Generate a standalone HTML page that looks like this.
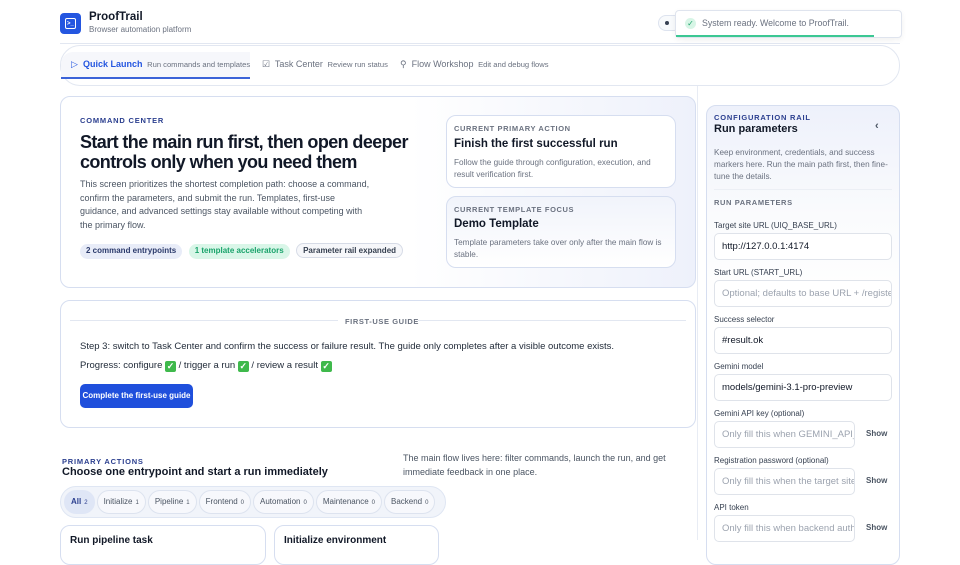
<!DOCTYPE html>
<html><head><meta charset="utf-8"><style>
*{box-sizing:border-box;margin:0;padding:0}
body{width:960px;height:540px;overflow:hidden;background:#fff;font-family:"Liberation Sans",sans-serif;color:#111827;position:relative}
.a{position:absolute}
.lbl{font-size:7.5px;font-weight:bold;letter-spacing:.8px;color:#2b3f8f;line-height:9px}
.glbl{font-size:7.5px;font-weight:bold;letter-spacing:.6px;color:#6b7280}
.card{border:1px solid #d6def0;border-radius:10px;background:#fff}
.pill{border-radius:10px;font-size:8px;font-weight:bold;height:15px;line-height:14px;padding:0 6px;display:inline-block}
.in{position:absolute;left:714px;width:178px;height:27px;border:1px solid #dfe3ea;border-radius:5px;background:#fff;font-size:9.5px;line-height:25px;padding-left:7px;color:#111827;white-space:nowrap;overflow:hidden}
.ph{color:#9ca3af}
.fl{position:absolute;left:714px;font-size:8px;color:#374151}
.show{position:absolute;left:866px;font-size:8px;font-weight:bold;color:#4b5563}
.chip{display:inline-block;height:24px;line-height:22px;border:1px solid #dde3ef;border-radius:12px;padding:0 6px;font-size:8px;color:#4b5563;margin-right:2px;background:#f7f8fc}
.chip b{font-weight:normal;font-size:6px;margin-left:3px}
.ck{display:inline-block;width:11px;height:11px;background:#3fb94c;border-radius:2px;color:#fff;font-size:9px;line-height:11px;text-align:center;vertical-align:-1px;font-weight:bold}
</style></head><body>
<!-- header -->
<div class="a" style="left:60px;top:13px;width:21px;height:21px;background:#2456e0;border-radius:4px"><div class="a" style="left:5px;top:5px;width:11px;height:11px;border:1.3px solid #fff;border-radius:2px"></div><div class="a" style="left:7px;top:8px;font-size:6px;color:#fff;font-weight:bold">&gt;_</div></div>
<div class="a" style="left:89px;top:11px;font-size:11.5px;font-weight:bold">ProofTrail</div>
<div class="a" style="left:89px;top:25px;font-size:8px;color:#6b7280">Browser automation platform</div>
<div class="a" style="left:658px;top:15px;width:24px;height:16px;border:1px solid #dde3ef;border-radius:8px;background:#f8fafc"><div class="a" style="left:6px;top:5px;width:4px;height:4px;border-radius:2px;background:#374151"></div></div>
<div class="a" style="left:60px;top:43px;width:840px;height:1px;background:#e2e7f1"></div>
<!-- toast -->
<div class="a" style="left:675px;top:10px;width:227px;height:28px;border:1px solid #dfe4ee;border-radius:4px;background:#fff;box-shadow:0 2px 6px rgba(0,0,0,.06)">
<div class="a" style="left:9px;top:7px;width:11px;height:11px;border-radius:6px;background:#d7f5e6;color:#1fa36b;font-size:8px;line-height:11px;text-align:center">✓</div>
<div class="a" style="left:26px;top:7px;font-size:8.8px;color:#6b7280">System ready. Welcome to ProofTrail.</div>
<div class="a" style="left:0;top:24px;width:198px;height:2px;background:#3cc793"></div></div>
<!-- tabs -->
<div class="a" style="left:60px;top:45px;width:840px;height:41px;border:1px solid #e2e7f1;border-radius:20px;background:#fff"></div>
<div class="a" style="left:61px;top:52px;width:189px;height:26px;background:#f6f7fb;border-radius:12px 0 0 0"></div>
<div class="a" style="left:61px;top:77px;width:189px;height:2px;background:#3b63d8"></div>
<div class="a" style="left:71px;top:59px;font-size:9px;color:#2456e0">▷</div>
<div class="a" style="left:83px;top:59px;font-size:9px;font-weight:bold;color:#2456e0;white-space:nowrap">Quick Launch <span style="font-weight:normal;color:#6b7280;font-size:7.6px">&nbsp;Run commands and templates</span></div>
<div class="a" style="left:262px;top:59px;font-size:9px;color:#6b7280;white-space:nowrap">☑&nbsp; Task Center <span style="font-size:7.6px">&nbsp;Review run status</span></div>
<div class="a" style="left:400px;top:59px;font-size:9px;color:#6b7280;white-space:nowrap">⚲&nbsp; Flow Workshop <span style="font-size:7.6px">&nbsp;Edit and debug flows</span></div>
<!-- divider vertical -->
<div class="a" style="left:697px;top:86px;width:1px;height:454px;background:#e8ecf4"></div>
<!-- command center -->
<div class="a card" style="left:60px;top:96px;width:636px;height:192px;background:linear-gradient(90deg,#fff 55%,#eef1fb)"></div>
<div class="a lbl" style="left:80px;top:116px">COMMAND CENTER</div>
<div class="a" style="left:80px;top:132px;font-size:18px;font-weight:bold;line-height:20px;width:350px;letter-spacing:-.6px">Start the main run first, then open deeper controls only when you need them</div>
<div class="a" style="left:80px;top:178px;width:295px;font-size:9px;line-height:13.6px;color:#4b5563">This screen prioritizes the shortest completion path: choose a command, confirm the parameters, and submit the run. Templates, first-use guidance, and advanced settings stay available without competing with the primary flow.</div>
<div class="a" style="left:80px;top:240px;white-space:nowrap"><span class="pill" style="background:#e8ecf8;color:#2b3a6b">2 command entrypoints</span> <span class="pill" style="background:#d9f6e8;color:#1aa36b;margin-left:2px">1 template accelerators</span> <span class="pill" style="border:1px solid #d6dbe6;background:#f6f7fa;color:#374151;margin-left:2px">Parameter rail expanded</span></div>
<div class="a card" style="left:446px;top:115px;width:230px;height:73px"></div>
<div class="a glbl" style="left:454px;top:124px">CURRENT PRIMARY ACTION</div>
<div class="a" style="left:454px;top:138px;font-size:11.5px;font-weight:bold">Finish the first successful run</div>
<div class="a" style="left:454px;top:157px;width:215px;font-size:8.2px;line-height:12px;color:#6b7280">Follow the guide through configuration, execution, and result verification first.</div>
<div class="a card" style="left:446px;top:196px;width:230px;height:72px;background:linear-gradient(180deg,#f1f4fb,#fff)"></div>
<div class="a glbl" style="left:454px;top:205px">CURRENT TEMPLATE FOCUS</div>
<div class="a" style="left:454px;top:218px;font-size:11.5px;font-weight:bold">Demo Template</div>
<div class="a" style="left:454px;top:237px;width:215px;font-size:8.2px;line-height:12px;color:#6b7280">Template parameters take over only after the main flow is stable.</div>
<!-- guide -->
<div class="a card" style="left:60px;top:300px;width:636px;height:128px"></div>
<div class="a" style="left:70px;top:320px;width:268px;height:1px;background:#e2e7f1"></div>
<div class="a" style="left:418px;top:320px;width:268px;height:1px;background:#e2e7f1"></div>
<div class="a glbl" style="left:345px;top:317px">FIRST-USE GUIDE</div>
<div class="a" style="left:80px;top:341px;font-size:9.5px;color:#1f2937;white-space:nowrap">Step 3: switch to Task Center and confirm the success or failure result. The guide only completes after a visible outcome exists.</div>
<div class="a" style="left:80px;top:360px;font-size:9.5px;color:#1f2937;white-space:nowrap">Progress: configure <span class="ck">✓</span> / trigger a run <span class="ck">✓</span> / review a result <span class="ck">✓</span></div>
<div class="a" style="left:80px;top:384px;width:113px;height:24px;background:#1f4fdc;border-radius:5px;color:#fff;font-size:8px;font-weight:bold;line-height:24px;text-align:center">Complete the first-use guide</div>
<!-- primary actions -->
<div class="a lbl" style="left:62px;top:457px">PRIMARY ACTIONS</div>
<div class="a" style="left:62px;top:466px;font-size:11px;font-weight:bold">Choose one entrypoint and start a run immediately</div>
<div class="a" style="left:403px;top:451px;width:270px;font-size:9px;line-height:14px;color:#4b5563">The main flow lives here: filter commands, launch the run, and get immediate feedback in one place.</div>
<div class="a" style="left:60px;top:486px;width:386px;height:32px;border:1px solid #dfe6f3;border-radius:16px;background:#f1f4fa"></div>
<div class="a" style="left:64px;top:490px;white-space:nowrap"><span class="chip" style="background:#dfe6f6;color:#2b3f8f;border-color:#dfe6f6;font-weight:bold">All<b>2</b></span><span class="chip">Initialize<b>1</b></span><span class="chip">Pipeline<b>1</b></span><span class="chip">Frontend<b>0</b></span><span class="chip">Automation<b>0</b></span><span class="chip">Maintenance<b>0</b></span><span class="chip">Backend<b>0</b></span></div>
<div class="a card" style="left:60px;top:525px;width:206px;height:40px"></div>
<div class="a" style="left:70px;top:535px;font-size:10px;font-weight:bold">Run pipeline task</div>
<div class="a card" style="left:274px;top:525px;width:165px;height:40px"></div>
<div class="a" style="left:284px;top:535px;font-size:10px;font-weight:bold">Initialize environment</div>
<!-- rail -->
<div class="a" style="left:706px;top:105px;width:194px;height:460px;border:1px solid #d6def0;border-radius:10px;background:linear-gradient(180deg,#eef1fb 0,#fafbfd 110px,#fff 200px)"></div>
<div class="a lbl" style="left:714px;top:113px">CONFIGURATION RAIL</div>
<div class="a" style="left:714px;top:123px;font-size:11px;font-weight:bold;line-height:13px">Run parameters</div>
<div class="a" style="left:875px;top:120px;font-size:11px;color:#4b5563;font-weight:bold">‹</div>
<div class="a" style="left:714px;top:147px;width:180px;font-size:8.2px;line-height:12px;color:#6b7280">Keep environment, credentials, and success markers here. Run the main path first, then fine-tune the details.</div>
<div class="a" style="left:714px;top:189px;width:178px;height:1px;background:#eceff5"></div>
<div class="a glbl" style="left:714px;top:198px">RUN PARAMETERS</div>
<div class="fl" style="top:221px">Target site URL (UIQ_BASE_URL)</div>
<div class="in" style="top:233px">http://127.0.0.1:4174</div>
<div class="fl" style="top:268px">Start URL (START_URL)</div>
<div class="in ph" style="top:280px">Optional; defaults to base URL + /register</div>
<div class="fl" style="top:315px">Success selector</div>
<div class="in" style="top:327px">#result.ok</div>
<div class="fl" style="top:362px">Gemini model</div>
<div class="in" style="top:374px">models/gemini-3.1-pro-preview</div>
<div class="fl" style="top:409px">Gemini API key (optional)</div>
<div class="in ph" style="top:421px;width:141px">Only fill this when GEMINI_API_KEY</div><div class="show" style="top:429px">Show</div>
<div class="fl" style="top:456px">Registration password (optional)</div>
<div class="in ph" style="top:468px;width:141px">Only fill this when the target site</div><div class="show" style="top:476px">Show</div>
<div class="fl" style="top:503px">API token</div>
<div class="in ph" style="top:515px;width:141px">Only fill this when backend auth</div><div class="show" style="top:523px">Show</div>
</body></html>
